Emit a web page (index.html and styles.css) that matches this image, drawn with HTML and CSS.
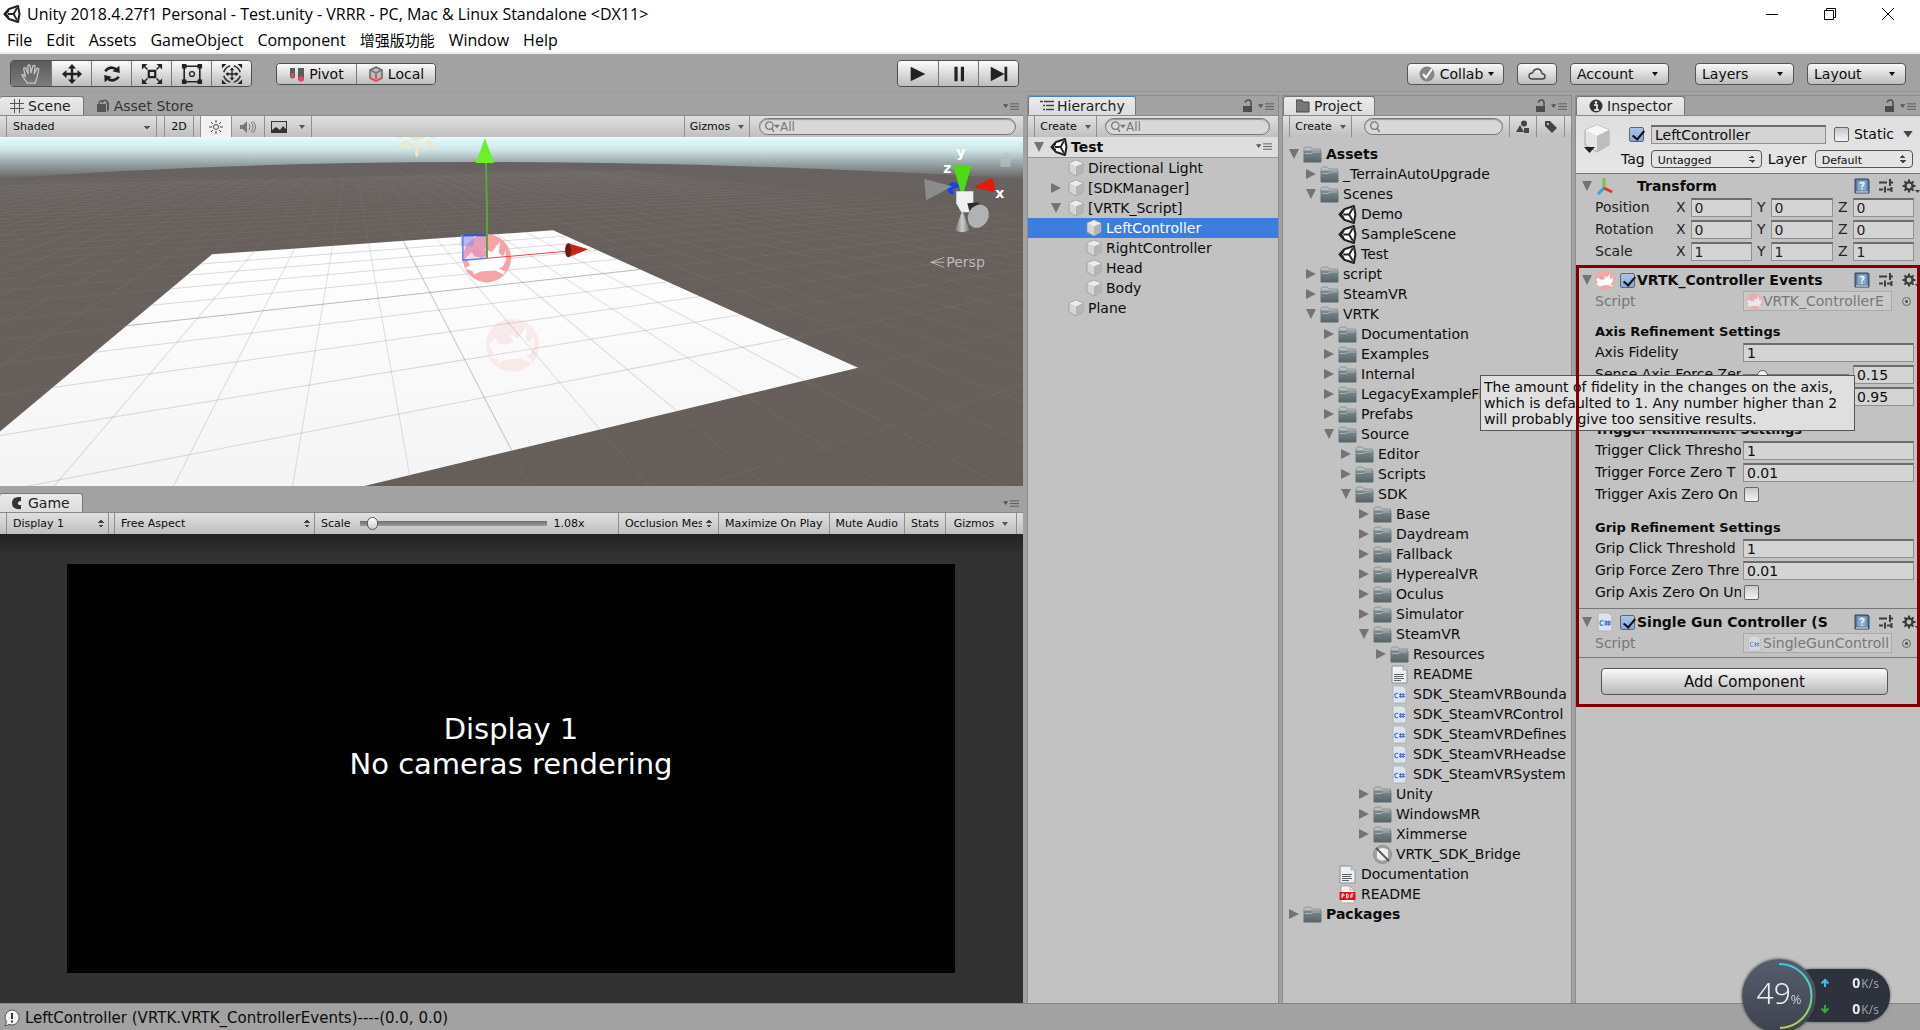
FILE: index.html
```html
<!DOCTYPE html>
<html lang="en">
<head>
<meta charset="utf-8">
<title>Unity 2018.4.27f1 Personal - Test.unity</title>
<link rel="stylesheet" href="styles.css">
</head>
<body>
<svg class="sprite" aria-hidden="true">
  <defs>
    <linearGradient id="folderFill" x1="0" y1="0" x2="0" y2="1"><stop offset="0" stop-color="#7c8a8e"/><stop offset="1" stop-color="#566468"/></linearGradient>
  </defs>
  <symbol id="unity" viewBox="0 0 18 18"><path d="M1.500 9 6 4l9-3 1.500 8-1.500 8-9-3z" fill="#fff" stroke="#222" stroke-width="2" stroke-linejoin="round"/><path d="M5 9h5.500l3.500-6M10.500 9l3.500 6" fill="none" stroke="#222" stroke-width="1.800"/><path d="m1 9 5-5v2.500L4 9l2 2.500V14z" fill="#222"/></symbol>
  <symbol id="folder" viewBox="0 0 19 19"><path d="M1 5V3.500L2.500 2h5L9 4h8.500v3H1z" fill="#b9c0c2" stroke="#7f898c" stroke-width=".8"/><rect x=".5" y="5.500" width="18" height="12" rx="1" fill="url(#folderFill)"/><path d="M2 8.500h6l2-1.500h7.500" stroke="#a9b7bb" fill="none"/></symbol>
  <symbol id="cube" viewBox="0 0 18 18"><path d="m9 1 7 3v9l-7 4-7-4V4z" fill="#d5d5d5" stroke="#999" stroke-width=".8"/><path d="m9 1.500 6.500 2.700L9 7.500 2.500 4.200z" fill="#ececec"/><path d="M9 7.500 15.600 4.500v8.300L9 16.600z" fill="#b4b4b4"/></symbol>
  <symbol id="doc" viewBox="0 0 19 19"><path d="M2 1h11l4 4v13H2z" fill="#eef1f3" stroke="#8a9298"/><path d="M13 1v4h4" fill="#cdd3d8" stroke="#8a9298" stroke-width=".6"/><path d="M4 9.500h10M4 11.500h9M4 13.500h10M4 15.500h7" stroke="#59636b"/></symbol>
  <symbol id="cs" viewBox="0 0 19 19"><path d="M3 1h10l3 3v14H3z" fill="#dde4ec" stroke="#a5adb6" stroke-width=".7"/><path d="M8 8.500Q4.800 7.500 4.800 10.500T8 12.500M10.500 8v5M13.200 8v5M9 9.500h6M9 11.500h6" fill="none" stroke="#4a70d0" stroke-width="1.200"/></symbol>
  <symbol id="pdf" viewBox="0 0 19 19"><path d="M3 1h9l4 4v13H3z" fill="#f6f6f6" stroke="#aaa"/><path d="M12 1v4h4" fill="none" stroke="#aaa"/><path d="M1.500 7h16v8h-16z" fill="#e1101a"/><path d="M4 13V9h1.500q1.200 1.200 0 2H4M8.500 9v4h1q2-2 0-4zM13 13V9h2.500M13 11h2" fill="none" stroke="#fff"/></symbol>
  <symbol id="ban" viewBox="0 0 19 19"><circle cx="9.500" cy="9.500" r="9" fill="#a2a2a2" stroke="#8a8a8a"/><path d="M4 5q6-4 11 0v8q-6 5-11 0z" fill="#efefef"/><path d="m3 3 13 13" stroke="#555" stroke-width="1.800"/></symbol>
  <symbol id="menu" viewBox="0 0 18 10"><path d="M0 2h6L3 6z" fill="#555"/><path d="M8 1.500h10M8 4.500h10M8 7.500h10" stroke="#555"/></symbol>
  <symbol id="lock" viewBox="0 0 12 14"><path d="M1 7h9v6H1z" fill="#4d4d4d"/><path d="M3 3.500Q4 1 6.500 1T9 4v3" fill="none" stroke="#4d4d4d" stroke-width="1.500"/></symbol>
  <symbol id="help" viewBox="0 0 16 16"><path d="M1 1h13l1 1v13H1z" fill="#5f7a9a" stroke="#33445a"/><path d="M3.500 2.500h9v10h-9z" fill="#85a9d0"/><path d="M6 5.500q2-2 4 0 0 1.500-2 2.500v1.500M8 10.500v1.500" stroke="#fff" stroke-width="1.300" fill="none"/><path d="M2 14h12" stroke="#e7eaee"/></symbol>
  <symbol id="preset" viewBox="0 0 14 14"><path d="M0 3.500h8M12 3.500h2M0 10.500h4M8 10.500h5" stroke="#3c3c3c" stroke-width="2"/><path d="M11 0v7M6 7.500v6M12.500 8v5" stroke="#3c3c3c" stroke-width="2"/></symbol>
  <symbol id="gear" viewBox="0 0 18 15"><circle cx="7" cy="7" r="3.600" fill="none" stroke="#3c3c3c" stroke-width="2.400"/><path d="M7 .5v3M7 10.500v3M.5 7h3M10.500 7h3M2.400 2.400l2 2M9.600 9.600l2 2M2.400 11.600l2-2M9.600 4.400l2-2" stroke="#3c3c3c" stroke-width="2"/><path d="M13 11h5l-2.500 3z" fill="#3c3c3c"/></symbol>
  <symbol id="pig" viewBox="0 0 48 48"><circle cx="24" cy="24" r="24" fill="#f5a5a5"/><path d="M2 24 9 18l2 4 8 2 6-4-4-6 8 4 8-11-1 12 4 3 3-6v10l-3 6-4 2 6 3-1 3-9-4-14 1-7 3-1-3-8-3 5-3-3-6z" fill="#fff"/><path d="m9 17 5-4 5 5-5 4z" fill="#ef9ab5"/></symbol>
  <symbol id="find" viewBox="0 0 18 14"><circle cx="6" cy="6" r="4.200" fill="none" stroke="#777" stroke-width="1.400"/><path d="m9 9 3 4" stroke="#777" stroke-width="1.600"/></symbol>
  <symbol id="findmenu" viewBox="0 0 18 14"><circle cx="6" cy="6" r="4.200" fill="none" stroke="#777" stroke-width="1.400"/><path d="m9 9 2 4" stroke="#777" stroke-width="1.600"/><path d="M11 5h7l-3.500 4z" fill="#777"/></symbol>
</svg>

<header class="titlebar">
  <svg class="i18"><use href="#unity"/></svg>
  <h1>Unity 2018.4.27f1 Personal - Test.unity - VRRR - PC, Mac &amp; Linux Standalone &lt;DX11&gt;</h1>
  <div class="window-buttons">
    <button aria-label="Minimize"><svg viewBox="0 0 14 14"><path d="M1 7.500h12" stroke="#000"/></svg></button>
    <button aria-label="Restore"><svg viewBox="0 0 14 14"><path d="M1.500 3.500h9v9h-9zM3.500 3.500v-2h9v9h-2" fill="none" stroke="#000"/></svg></button>
    <button aria-label="Close"><svg viewBox="0 0 14 14"><path d="m1 1 12 12M13 1 1 13" stroke="#000"/></svg></button>
  </div>
</header>
<nav class="menubar">
  <a href="#">File</a><a href="#">Edit</a><a href="#">Assets</a><a href="#">GameObject</a><a href="#">Component</a><a href="#" lang="zh">增强版功能</a><a href="#">Window</a><a href="#">Help</a>
</nav>

<div class="toolbar">
  <div class="bar-left">
    <div class="group tall">
      <button class="pressed" aria-label="Hand"><svg viewBox="0 0 24 24"><path d="M8 22q-3-4-6-9 1-2 4 2L4 6q1-2 2.500 0L9 12 8.500 3q1.500-2 2.500 0l1 8 2-8q2-1 2.500 0l-1 9 3-6q2-1 2 1l-2 9-2 6z" fill="none" stroke="#c4c4c4" stroke-width="1.400"/></svg></button>
      <button aria-label="Move"><svg viewBox="0 0 24 24"><path d="M12 4v16M4 12h16" stroke="#222" stroke-width="2.600"/><path d="m12 1 4.500 5h-9zM12 23l4.500-5h-9zM1 12l5-4.500v9zM23 12l-5-4.500v9z" fill="#222"/></svg></button>
      <button aria-label="Rotate"><svg viewBox="0 0 24 24"><path d="M4.500 9q6-7 13-1.500M19.500 15q-6 7-13 1.500" fill="none" stroke="#222" stroke-width="2.800"/><path d="m20 3 .5 8-8-2zM4 21l-.5-8 8 2z" fill="#222"/></svg></button>
      <button aria-label="Scale"><svg viewBox="0 0 24 24"><path d="M8.500 8.500h7v7h-7z" fill="none" stroke="#222" stroke-width="2.400"/><path d="m2 2 5 5M22 2l-5 5M2 22l5-5M22 22l-5-5" stroke="#222" stroke-width="1.600"/><path d="M1 1h6L1 7zM23 1h-6l6 6zM1 23h6l-6-6zM23 23h-6l6-6z" fill="#222"/></svg></button>
      <button aria-label="Rect"><svg viewBox="0 0 24 24"><path d="M3.500 3.500h17v17h-17z" fill="none" stroke="#222" stroke-width="1.800"/><circle cx="12" cy="12" r="2.700" fill="none" stroke="#222" stroke-width="1.400"/><path d="M1 1h5v5H1zM18 1h5v5h-5zM1 18h5v5H1zM18 18h5v5h-5z" fill="#222"/></svg></button>
      <button aria-label="Transform"><svg viewBox="0 0 24 24"><path d="M12 6v12M6 12h12" stroke="#222" stroke-width="1.400"/><path d="m12 5 2.500 3h-5zM12 19l2.500-3h-5zM5 12l3-2.500v5zM19 12l-3-2.500v5zM1 1h5L1 6zM23 1h-5l5 5zM1 23h5l-5-5zM23 23h-5l5-5z" fill="#222"/><path d="M3 10Q4.500 5 10 3M14 3q5.500 2 7 7M3 14q1.500 5 7 7M14 21q5.500-2 7-7" stroke="#333" stroke-width="1.800" fill="none"/></svg></button>
    </div>
    <div class="group">
      <button class="wide"><svg viewBox="0 0 16 16" class="i16"><path d="M1 2h5v9q-2.500 3-5 0zM9 2h6v12q-3 2-6 0z" fill="#5b5b5b"/><path d="M2 7h3v4q-1.500 2-3 0z" fill="#e84a55"/><circle cx="12" cy="13" r="2.800" fill="#e84a55"/></svg>Pivot</button>
      <button class="wide"><svg viewBox="0 0 16 16" class="i16"><path d="m8 1 6 3v8l-6 3-6-3V4z" fill="#bbb" stroke="#666" stroke-width="1.500"/><path d="m2 4 6 3 6-3M8 7v5" fill="none" stroke="#777" stroke-width="1.500"/><path d="M8 9v4M2 12l6 3 6-3" stroke="#e84a55" stroke-width="1.800" fill="none"/></svg>Local</button>
    </div>
  </div>
  <div class="group tall">
    <button aria-label="Play"><svg viewBox="0 0 24 24"><path d="m4 4 16 8-16 8z" fill="#222"/></svg></button>
    <button aria-label="Pause"><svg viewBox="0 0 24 24"><path d="M7 4h3.500v16H7zM14 4h3.500v16H14z" fill="#222"/></svg></button>
    <button aria-label="Step"><svg viewBox="0 0 24 24"><path d="m3 4 15 8-15 8zM18 4h3v16h-3z" fill="#222"/></svg></button>
  </div>
  <div class="bar-right">
    <button class="pill collab"><svg viewBox="0 0 16 16" class="i16"><circle cx="8" cy="8" r="7.500" fill="#858585"/><path d="m4 8 3 3.500L13 3" fill="none" stroke="#fff" stroke-width="2"/></svg>Collab<i class="caret"></i></button>
    <button class="pill cloud" aria-label="Services"><svg viewBox="0 0 18 14" class="i18"><path d="M4.500 12Q1 12 1 9t3.500-3Q6 2 9.500 2T14 6.500Q17 7 17 9.500T14 12z" fill="none" stroke="#444" stroke-width="1.400"/></svg></button>
    <button class="pill account">Account<i class="caret"></i></button>
    <button class="pill layers">Layers<i class="caret"></i></button>
    <button class="pill">Layout<i class="caret"></i></button>
  </div>
</div>

<main class="workspace">
  <div class="views">
    <section class="panel scene-panel">
      <div class="tabs">
        <button class="tab on flush"><svg viewBox="0 0 14 14" class="i14"><path d="M4.500 0v14M9.500 0v14M0 4.500h14M0 9.500h14" stroke="#555"/></svg>Scene</button>
        <button class="tab"><svg viewBox="0 0 14 14" class="i14"><path d="M1 5h9v8H1zM11 4l2-1v8l-2 2z" fill="#555"/><path d="M3 5q0-4 4-3M6 4q1-4 5-2v3" fill="none" stroke="#555" stroke-width="1.500"/></svg>Asset Store</button>
        <svg class="menu-icon"><use href="#menu"/></svg>
      </div>
      <div class="strip">
        <label class="cell shaded"><select aria-label="Shading"><option>Shaded</option></select></label>
        <button class="cell two-d">2D</button>
        <button class="cell lit" aria-label="Lighting"><svg viewBox="0 0 14 14" class="i14"><circle cx="7" cy="7" r="2.500" fill="none" stroke="#444"/><path d="M7 0v3M7 11v3M0 7h3M11 7h3M2 2l2 2M10 10l2 2M2 12l2-2M10 4l2-2" stroke="#444"/></svg></button>
        <button class="cell audio" aria-label="Audio"><svg viewBox="0 0 16 14" class="i16"><path d="M0 5h3l4-4v12L3 9H0z" fill="#777"/><path d="M9 4q2 3 0 6M11 2q4 5 0 10M13 1q5 6 0 12" fill="none" stroke="#777"/></svg></button>
        <button class="cell effects" aria-label="Effects"><svg viewBox="0 0 16 12" class="i16"><path d="M0 0h16v12H0z" fill="#333"/><path d="M1 1h14v7l-3-3-3 4-4-3-4 3z" fill="#ccc"/></svg><i class="arrow"></i></button>
        <span class="grow"></span>
        <button class="cell gizmos">Gizmos<i class="arrow"></i></button>
        <label class="search scene-search"><svg><use href="#findmenu"/></svg><input type="text" placeholder="All" aria-label="Search scene"></label>
      </div>
      <svg id="scene" class="scene" viewBox="0 0 1023 348" preserveAspectRatio="xMidYMid slice">
        <defs>
          <linearGradient id="sky" x1="0" y1="0" x2="0" y2="1"><stop offset="0" stop-color="#e6fdff"/><stop offset=".3" stop-color="#cfe6e8"/><stop offset=".65" stop-color="#93a0a2"/><stop offset="1" stop-color="#686362"/></linearGradient>
          <linearGradient id="ground" x1="0" y1="0" x2="0" y2="1"><stop offset="0" stop-color="#686464"/><stop offset=".25" stop-color="#67605c"/><stop offset="1" stop-color="#665e59"/></linearGradient>
          <linearGradient id="plane" x1="0" y1="0" x2="0" y2="1"><stop offset="0" stop-color="#ffffff"/><stop offset="1" stop-color="#eeeeee"/></linearGradient>
          <linearGradient id="grey" x1="0" y1="0" x2="1" y2="0"><stop offset="0" stop-color="#777"/><stop offset=".5" stop-color="#ccc"/><stop offset="1" stop-color="#777"/></linearGradient>
          <clipPath id="planeClip"><path d="M213 117 553 93l304 137L-236 492z"/></clipPath>
        </defs>
        <rect width="1023" height="348" fill="url(#ground)"/>
        <g id="far-grid" stroke="#8b8582" stroke-opacity=".2"></g>
        <path d="M0 0h1023v42Q720 24 460 25T0 42z" fill="url(#sky)"/>
        <path d="M213 117 553 93l304 137L-236 492z" fill="url(#plane)"/>
        <g id="plane-grid" clip-path="url(#planeClip)" stroke="#777"></g>
        <g stroke="#f6e6c4" stroke-width="4" stroke-linecap="round"><circle cx="417" cy="-6" r="10" fill="#f6e6c4" stroke="none"/><path d="M417 9v9M410 7l-2 4M424 7l2 4M406 4l-5 5M428 4l5 5M402 0h-2M432 0h2" stroke-width="3"/></g>
        <use href="#pig" x="463" y="96" width="48" height="50"/>
        <use href="#pig" x="486" y="181" width="53" height="53" opacity=".18"/>
        <path d="M463 98h23l1 23-24 2z" fill="#c58af0" fill-opacity=".25"/><path d="M461 97h13v12h-13z" fill="#7f8ff0" fill-opacity=".5"/><path d="M463 98h24" stroke="#2f50d8" stroke-width="2"/><path d="M463 98v25l24-2" fill="none" stroke="#6a80f0" stroke-width="1.500"/>
        <path d="M487 121V68l-1-42" stroke="#5aa63a" stroke-width="2" fill="none"/><path d="M485 1l9 25h-18z" fill="#6cf028"/>
        <path d="m487 121 79-7" stroke="#f04a40"/><path d="M588 112l-20-6q-5 7 0 14z" fill="#c8241f"/><ellipse cx="568" cy="113" rx="3" ry="7" fill="#6d1a18"/>
        <g><circle cx="952" cy="51" r="6" fill="#1b3fe8"/><path d="M923 42l28 7-26 14z" fill="#8c8c8c"/><path d="m951 52 11-4 10 4-2 12-14 2z" fill="#60666c"/><path d="M952 29h18l-9 31z" fill="#4fdb14"/><path d="M955 54h17v21h-12l-5-9z" fill="#eef0f2"/><path d="m972 50 18-9q6 8 2 14z" fill="#e01c10"/><path d="M966 66l12-1-8 16z" fill="#2c2c2c"/><ellipse cx="977" cy="79" rx="10" ry="12" fill="#b0b2b4" transform="rotate(30 977 79)"/><path d="m961 73 7 20q-7 4-14 0z" fill="url(#grey)"/></g>
        <g class="axis"><text x="955" y="20">y</text><text x="942" y="36">z</text><text x="994" y="61">x</text></g>
        <path d="M943 120l-13 5 13 5M930 125h13" fill="none" stroke="#bdbab8"/><text class="persp" x="945" y="130">Persp</text>
        <path d="M999 22h10v8h-10zM1002 18q3-6 6 0v4" fill="#b9c6c5" opacity=".6"/>
      </svg>
    </section>
    <section class="panel game-panel">
      <div class="tabs">
        <button class="tab on flush"><svg viewBox="0 0 14 14" class="i14"><path d="M11 1Q2 0 2 7t9 6V9q-4 0-3-2 0-2 3-2z" fill="#333"/></svg>Game</button>
        <svg class="menu-icon"><use href="#menu"/></svg>
      </div>
      <div class="strip">
        <label class="cell display"><select class="updown" aria-label="Display"><option>Display 1</option></select></label>
        <label class="cell aspect"><select class="updown" aria-label="Aspect"><option>Free Aspect</option></select></label>
        <label class="scale">Scale <input type="range" min="0.9" max="5" step="0.01" value="1.08"><output>1.08x</output></label>
        <span class="grow"></span>
        <label class="cell occlusion"><select class="updown" aria-label="Occlusion"><option>Occlusion Mesh</option></select></label>
        <button class="cell">Maximize On Play</button>
        <button class="cell">Mute Audio</button>
        <button class="cell">Stats</button>
        <button class="cell game-gizmos">Gizmos<i class="arrow"></i></button>
      </div>
      <div class="game"><div class="display-area"><p>Display 1<br>No cameras rendering</p></div></div>
    </section>
  </div>

  <section class="panel side">
    <div class="tabs">
      <button class="tab on focus"><svg viewBox="0 0 14 14" class="i14"><path d="M0 2.500h3M4 2.500h10M3 6.500h2M6 6.500h8M3 10.500h2M6 10.500h8" stroke="#444" stroke-width="1.500"/></svg>Hierarchy</button>
      <svg class="lock-icon"><use href="#lock"/></svg><svg class="menu-icon"><use href="#menu"/></svg>
    </div>
    <div class="strip">
      <button class="cell create">Create<i class="arrow"></i></button>
      <label class="search hier-search"><svg><use href="#findmenu"/></svg><input type="text" placeholder="All" aria-label="Search hierarchy"></label>
    </div>
    <ul class="tree hierarchy">
      <li class="root"><i class="open"></i><svg><use href="#unity"/></svg><b>Test</b><svg class="menu-icon"><use href="#menu"/></svg></li>
      <li class="d1"><i></i><svg><use href="#cube"/></svg><span>Directional Light</span></li>
      <li class="d1"><i class="shut"></i><svg><use href="#cube"/></svg><span>[SDKManager]</span></li>
      <li class="d1"><i class="open"></i><svg><use href="#cube"/></svg><span>[VRTK_Script]</span></li>
      <li class="d2 selected"><i></i><svg><use href="#cube"/></svg><span>LeftController</span></li>
      <li class="d2"><i></i><svg><use href="#cube"/></svg><span>RightController</span></li>
      <li class="d2"><i></i><svg><use href="#cube"/></svg><span>Head</span></li>
      <li class="d2"><i></i><svg><use href="#cube"/></svg><span>Body</span></li>
      <li class="d1"><i></i><svg><use href="#cube"/></svg><span>Plane</span></li>
    </ul>
  </section>

  <section class="panel side">
    <div class="tabs">
      <button class="tab on"><svg viewBox="0 0 14 14" class="i14"><path d="M0 3V1h6l1 2h6v10H0z" fill="#777" stroke="#444"/></svg>Project</button>
      <svg class="lock-icon"><use href="#lock"/></svg><svg class="menu-icon"><use href="#menu"/></svg>
    </div>
    <div class="strip">
      <button class="cell create">Create<i class="arrow"></i></button>
      <label class="search project-search"><svg><use href="#find"/></svg><input type="text" aria-label="Search project"></label>
      <button class="cell filter" aria-label="Filter by type"><svg viewBox="0 0 14 14" class="i14"><circle cx="8" cy="3.500" r="3" fill="#444"/><path d="m4 5 4 7H0zM8 8h5v5H8z" fill="#444"/></svg></button>
      <button class="cell filter last" aria-label="Filter by label"><svg viewBox="0 0 14 14" class="i14"><path d="M1 1h5l7 7-5 5-7-7z" fill="#444"/><circle cx="4" cy="4" r="1" fill="#ddd"/></svg></button>
    </div>
    <ul class="tree project">
      <li><i class="open"></i><svg><use href="#folder"/></svg><b>Assets</b></li>
      <li class="d1"><i class="shut"></i><svg><use href="#folder"/></svg><span>_TerrainAutoUpgrade</span></li>
      <li class="d1"><i class="open"></i><svg><use href="#folder"/></svg><span>Scenes</span></li>
      <li class="d2"><i></i><svg><use href="#unity"/></svg><span>Demo</span></li>
      <li class="d2"><i></i><svg><use href="#unity"/></svg><span>SampleScene</span></li>
      <li class="d2"><i></i><svg><use href="#unity"/></svg><span>Test</span></li>
      <li class="d1"><i class="shut"></i><svg><use href="#folder"/></svg><span>script</span></li>
      <li class="d1"><i class="shut"></i><svg><use href="#folder"/></svg><span>SteamVR</span></li>
      <li class="d1"><i class="open"></i><svg><use href="#folder"/></svg><span>VRTK</span></li>
      <li class="d2"><i class="shut"></i><svg><use href="#folder"/></svg><span>Documentation</span></li>
      <li class="d2"><i class="shut"></i><svg><use href="#folder"/></svg><span>Examples</span></li>
      <li class="d2"><i class="shut"></i><svg><use href="#folder"/></svg><span>Internal</span></li>
      <li class="d2"><i class="shut"></i><svg><use href="#folder"/></svg><span>LegacyExampleFi</span></li>
      <li class="d2"><i class="shut"></i><svg><use href="#folder"/></svg><span>Prefabs</span></li>
      <li class="d2"><i class="open"></i><svg><use href="#folder"/></svg><span>Source</span></li>
      <li class="d3"><i class="shut"></i><svg><use href="#folder"/></svg><span>Editor</span></li>
      <li class="d3"><i class="shut"></i><svg><use href="#folder"/></svg><span>Scripts</span></li>
      <li class="d3"><i class="open"></i><svg><use href="#folder"/></svg><span>SDK</span></li>
      <li class="d4"><i class="shut"></i><svg><use href="#folder"/></svg><span>Base</span></li>
      <li class="d4"><i class="shut"></i><svg><use href="#folder"/></svg><span>Daydream</span></li>
      <li class="d4"><i class="shut"></i><svg><use href="#folder"/></svg><span>Fallback</span></li>
      <li class="d4"><i class="shut"></i><svg><use href="#folder"/></svg><span>HyperealVR</span></li>
      <li class="d4"><i class="shut"></i><svg><use href="#folder"/></svg><span>Oculus</span></li>
      <li class="d4"><i class="shut"></i><svg><use href="#folder"/></svg><span>Simulator</span></li>
      <li class="d4"><i class="open"></i><svg><use href="#folder"/></svg><span>SteamVR</span></li>
      <li class="d5"><i class="shut"></i><svg><use href="#folder"/></svg><span>Resources</span></li>
      <li class="d5"><i></i><svg><use href="#doc"/></svg><span>README</span></li>
      <li class="d5"><i></i><svg><use href="#cs"/></svg><span>SDK_SteamVRBounda</span></li>
      <li class="d5"><i></i><svg><use href="#cs"/></svg><span>SDK_SteamVRControl</span></li>
      <li class="d5"><i></i><svg><use href="#cs"/></svg><span>SDK_SteamVRDefines</span></li>
      <li class="d5"><i></i><svg><use href="#cs"/></svg><span>SDK_SteamVRHeadse</span></li>
      <li class="d5"><i></i><svg><use href="#cs"/></svg><span>SDK_SteamVRSystem</span></li>
      <li class="d4"><i class="shut"></i><svg><use href="#folder"/></svg><span>Unity</span></li>
      <li class="d4"><i class="shut"></i><svg><use href="#folder"/></svg><span>WindowsMR</span></li>
      <li class="d4"><i class="shut"></i><svg><use href="#folder"/></svg><span>Ximmerse</span></li>
      <li class="d4"><i></i><svg><use href="#ban"/></svg><span>VRTK_SDK_Bridge</span></li>
      <li class="d2"><i></i><svg><use href="#doc"/></svg><span>Documentation</span></li>
      <li class="d2"><i></i><svg><use href="#pdf"/></svg><span>README</span></li>
      <li><i class="shut"></i><svg><use href="#folder"/></svg><b>Packages</b></li>
    </ul>
  </section>

  <section class="panel side inspector">
    <div class="tabs">
      <button class="tab on"><svg viewBox="0 0 14 14" class="i14"><circle cx="7" cy="7" r="6.500" fill="#333"/><path d="M5 6h3v5M5 11h5" stroke="#fff" stroke-width="1.500" fill="none"/><circle cx="7" cy="3.500" r="1.200" fill="#fff"/></svg>Inspector</button>
      <svg class="lock-icon"><use href="#lock"/></svg><svg class="menu-icon"><use href="#menu"/></svg>
    </div>
    <div class="object-head">
      <svg class="object-icon" viewBox="0 0 30 30"><path d="m15 1 12 5v15l-12 7L3 21V6z" fill="#e4e4e4" stroke="#aaa"/><path d="m15 1 12 5-12 6L3 6z" fill="#f6f6f6"/><path d="m15 12 12-6v15l-12 7z" fill="#bdbdbd"/><path d="M2 23h11l-5.500 6z" fill="#222"/></svg>
      <div class="object-rows">
        <div class="object-row"><input type="checkbox" checked aria-label="Active"><input class="field name" type="text" value="LeftController" aria-label="Name"><input type="checkbox" id="static"><label for="static">Static</label><i class="open dark"></i></div>
        <div class="object-row second"><label for="tag">Tag</label><select id="tag" class="popup"><option>Untagged</option></select><label for="layer">Layer</label><select id="layer" class="popup layer"><option>Default</option></select></div>
      </div>
    </div>
    <div class="component transform">
      <h2><i class="open"></i><svg class="comp-icon" viewBox="0 0 20 20"><path d="M9 12V2" stroke="#7dc242" stroke-width="3"/><path d="m9 12-6 6" stroke="#3d9fd8" stroke-width="3"/><path d="m9 12 8 4" stroke="#e0342b" stroke-width="3"/></svg><span class="comp-name">Transform</span><svg class="help"><use href="#help"/></svg><svg class="preset"><use href="#preset"/></svg><svg class="gear"><use href="#gear"/></svg></h2>
      <div class="vector"><span>Position</span><label>X<input class="field" type="text" value="0"></label><label>Y<input class="field" type="text" value="0"></label><label>Z<input class="field" type="text" value="0"></label></div>
      <div class="vector"><span>Rotation</span><label>X<input class="field" type="text" value="0"></label><label>Y<input class="field" type="text" value="0"></label><label>Z<input class="field" type="text" value="0"></label></div>
      <div class="vector"><span>Scale</span><label>X<input class="field" type="text" value="1"></label><label>Y<input class="field" type="text" value="1"></label><label>Z<input class="field" type="text" value="1"></label></div>
    </div>
    <div class="marked">
      <div class="component">
        <h2><i class="open"></i><svg class="comp-icon"><use href="#pig"/></svg><input type="checkbox" checked aria-label="VRTK_Controller Events enabled"><span class="comp-name">VRTK_Controller Events</span><svg class="help"><use href="#help"/></svg><svg class="preset"><use href="#preset"/></svg><svg class="gear"><use href="#gear"/></svg></h2>
        <div class="row muted"><span>Script</span><div class="object-ref"><svg><use href="#pig"/></svg><span>VRTK_ControllerE</span></div><i class="picker"></i></div>
        <h3 class="first">Axis Refinement Settings</h3>
        <div class="row"><label for="f1">Axis Fidelity</label><input id="f1" class="field" type="text" value="1"></div>
        <div class="row"><label for="f2">Sense Axis Force Zer</label><input class="slide" type="range" min="0" max="1" step="0.01" value="0.15" aria-label="Sense axis force zero threshold"><input id="f2" class="field short" type="text" value="0.15"></div>
        <div class="row"><label for="f3">Sense Axis Press</label><input class="slide" type="range" min="0" max="1" step="0.01" value="0.95" aria-label="Sense axis press threshold"><input id="f3" class="field short" type="text" value="0.95"></div>
        <h3>Trigger Refinement Settings</h3>
        <div class="row"><label for="f4">Trigger Click Thresho</label><input id="f4" class="field" type="text" value="1"></div>
        <div class="row"><label for="f5">Trigger Force Zero T</label><input id="f5" class="field" type="text" value="0.01"></div>
        <div class="row"><label for="f6">Trigger Axis Zero On</label><input id="f6" type="checkbox"></div>
        <h3>Grip Refinement Settings</h3>
        <div class="row"><label for="f7">Grip Click Threshold</label><input id="f7" class="field" type="text" value="1"></div>
        <div class="row"><label for="f8">Grip Force Zero Thre</label><input id="f8" class="field" type="text" value="0.01"></div>
        <div class="row"><label for="f9">Grip Axis Zero On Un</label><input id="f9" type="checkbox"></div>
      </div>
      <div class="component ruled">
        <h2><i class="open"></i><svg class="comp-icon"><use href="#cs"/></svg><input type="checkbox" checked aria-label="Single Gun Controller enabled"><span class="comp-name">Single Gun Controller (S</span><svg class="help"><use href="#help"/></svg><svg class="preset"><use href="#preset"/></svg><svg class="gear"><use href="#gear"/></svg></h2>
        <div class="row muted"><span>Script</span><div class="object-ref"><svg><use href="#cs"/></svg><span>SingleGunControll</span></div><i class="picker"></i></div>
      </div>
      <div class="add"><button>Add Component</button></div>
      <div class="tooltip" role="tooltip">The amount of fidelity in the changes on the axis,<br>which is defaulted to 1. Any number higher than 2<br>will probably give too sensitive results.</div>
    </div>
  </section>
</main>

<footer class="status"><svg viewBox="0 0 18 18" class="i18"><path d="M9 1a7.500 7.500 0 1 1-3 14.500L2 17l1.500-4A7.500 7.500 0 0 1 9 1z" fill="#f4f4f4" stroke="#555"/><path d="M9 4v6M9 11.500v2" stroke="#333" stroke-width="2"/></svg>LeftController (VRTK.VRTK_ControllerEvents)----(0.0, 0.0)</footer>

<aside class="monitor">
  <div class="net">
    <div><svg viewBox="0 0 10 10"><path d="M5 9V2M1.500 5.500 5 2l3.500 3.500" fill="none" stroke="#4ab4f5" stroke-width="2"/></svg><span><b>0</b>K/s</span></div>
    <div><svg viewBox="0 0 10 10"><path d="M5 1v7M1.500 4.500 5 8l3.500-3.500" fill="none" stroke="#2fae3c" stroke-width="2"/></svg><span><b>0</b>K/s</span></div>
  </div>
  <div class="dial">
    <svg viewBox="0 0 74 74"><defs><linearGradient id="arc" x1="0" y1="0" x2="0" y2="1"><stop offset="0" stop-color="#3fc8d8"/><stop offset=".5" stop-color="#5fd6a8"/><stop offset="1" stop-color="#c0cc4a"/></linearGradient></defs><path d="M37 5a32 32 0 0 1 1 64" fill="none" stroke="url(#arc)" stroke-width="2"/></svg>
    <p>49<small>%</small></p>
  </div>
</aside>
<script src="scene.js"></script>
</body>
</html>
```
FILE: styles.css
```css
* { box-sizing: border-box; }
body {
  margin: 0;
  min-height: 100vh;
  display: flex;
  flex-direction: column;
  background: #a2a2a2;
  color: #0c0c0c;
  font: 14px/20px "DejaVu Sans", "Noto Sans CJK SC", sans-serif;
  overflow: hidden;
}
button, input, select { font: inherit; color: inherit; margin: 0; padding: 0; border: 0; background: none; }
select { appearance: none; border-radius: 0; }
h1, h2, h3, p, ul { margin: 0; padding: 0; font-weight: normal; }
svg { display: block; flex: none; }
.sprite { position: absolute; width: 0; height: 0; }
.i14 { width: 14px; height: 14px; }
.i16 { width: 16px; height: 16px; }
.i18 { width: 18px; height: 18px; }
.grow { flex: 1; }

/* window chrome */
.titlebar, .menubar { background: #fff; font-family: "Open Sans", "Noto Sans CJK SC", sans-serif; font-size: 16px; color: #000; display: flex; align-items: center; }
.titlebar { height: 30px; padding: 0 0 2px 3px; gap: 6px; }
.titlebar h1 { font-size: 16px; flex: 1; white-space: nowrap; }
.window-buttons { display: flex; gap: 44px; padding-right: 25px; }
.window-buttons button { width: 14px; height: 14px; }
.menubar { height: 24px; padding: 0 8px 2px 7px; gap: 14px; border-bottom: 2px solid #f0f0f0; }
.menubar a { color: inherit; text-decoration: none; }
.menubar a:lang(zh) { font-size: 15px; }

/* main toolbar */
.toolbar { display: grid; grid-template-columns: 1fr auto 1fr; align-items: center; height: 38px; padding: 2px 14px 0 10px; border-bottom: 1px solid #999; }
.bar-left { display: flex; align-items: center; gap: 24px; }
.bar-right { display: flex; justify-content: flex-end; gap: 13px; }
.group { display: flex; border: 1px solid #4e4e4e; border-radius: 4px; overflow: hidden; }
.group button { width: 40px; height: 20px; display: flex; align-items: center; justify-content: center; background: linear-gradient(#fbfbfb, #bdbdbd); }
.group button + button { border-left: 1px solid #777; }
.group.tall button { height: 25px; }
.group.tall svg { width: 22px; height: 22px; }
.group .pressed { background: linear-gradient(#5a5a5a, #7d7d7d); }
.group .wide { width: 79px; gap: 4px; }
.pill { width: 99px; height: 22px; padding: 0 10px 0 6px; display: flex; align-items: center; justify-content: space-between; background: linear-gradient(#f8f8f8, #bdbdbd); border: 1px solid #555; border-radius: 4px; }
.pill.collab { width: 97px; padding-left: 11px; padding-right: 9px; }
.pill.cloud { width: 40px; padding: 0; justify-content: center; }
.pill.account { margin-right: 13px; }
.caret { border: 3px solid transparent; border-top: 4px solid #111; border-bottom: 0; }

/* panels */
.workspace { flex: 1; display: grid; grid-template-columns: minmax(0, 1fr) 250px 288px 344px; gap: 5px; padding-top: 4px; }
.views { display: flex; flex-direction: column; gap: 7px; min-width: 0; }
.panel { display: flex; flex-direction: column; }
.side { background: linear-gradient(#a2a2a2 19px, #c2c2c2 19px); box-shadow: 0 0 0 1px #8b8b8b; }
.scene-panel { flex: 390; min-height: 0; }
.game-panel { flex: 510; min-height: 0; }
.tabs { display: flex; align-items: flex-end; height: 19px; padding-right: 4px; background: #a2a2a2; }
.tab { display: flex; align-items: center; gap: 4px; height: 19px; padding: 0 12px; color: #333; white-space: nowrap; }
.tab.on { background: linear-gradient(#eaeaea, #dcdcdc); border: 1px solid #777; border-bottom: 0; border-radius: 3px 3px 0 0; color: #222; }
.tab.flush { border-left: 0; padding-left: 10px; }
.tab.focus { border-top-color: #4a7fcc; padding: 0 10px 0 11px; gap: 3px; }
.menu-icon { width: 16px; height: 10px; margin: 0 0 3px auto; }
.lock-icon { width: 12px; height: 14px; margin: 0 4px 2px auto; }
.lock-icon + .menu-icon { margin-left: 0; }
.strip { display: flex; align-items: center; height: 22px; flex: none; background: linear-gradient(#e0e0e0, #bfbfbf); border-top: 1px solid #8a8a8a; font-size: 11px; white-space: nowrap; }
.cell { height: 21px; padding: 0 6px; border-right: 1px solid #8e8e8e; display: flex; align-items: center; justify-content: center; gap: 8px; }
.cell select { width: 100%; height: 20px; }
.arrow { border: 3px solid transparent; border-top: 4px solid #555; border-bottom: 0; }
.shaded { width: 151px; margin-left: 6px; border-left: 1px solid #8e8e8e; }
.shaded select { background: conic-gradient(from -45deg at 50% 100%, #555 90deg, transparent 0) no-repeat right 0 top 9px / 6px 3px; }
.updown, .popup { background: conic-gradient(from 135deg at 50% 0, #444 90deg, transparent 0) no-repeat right 0 top 6px / 6px 3px, conic-gradient(from -45deg at 50% 100%, #444 90deg, transparent 0) no-repeat right 0 top 11px / 6px 3px; }
.two-d { width: 30px; margin-left: 7px; border-left: 1px solid #8e8e8e; }
.lit { width: 32px; margin-left: 6px; background: #f2f2f2; border-left: 1px solid #8e8e8e; }
.audio { width: 33px; }
.effects { width: 47px; gap: 12px; }
.gizmos { border-left: 1px solid #8e8e8e; width: 66px; }
.search { display: flex; align-items: center; height: 17px; border: 1px solid #777; border-radius: 9px; background: #d8d8d8; box-shadow: inset 0 1px 1px #999; padding-left: 4px; margin: 0 7px 0 9px; min-width: 0; }
.search svg { width: 16px; height: 13px; }
.search input { width: 100%; min-width: 0; outline: 0; color: #777; font-size: 12px; }
.search input::placeholder { color: #777; opacity: 1; }
.scene-search { width: 257px; }
.hier-search { flex: 1; margin: 0 8px; }
.project-search { flex: 1; margin: 0 6px 0 12px; }
.create { width: 63px; margin-left: 6px; border-left: 1px solid #8e8e8e; }
.filter { width: 28px; }
.filter:not(.last) { border-left: 1px solid #8e8e8e; }
.last { margin-right: 6px; }

/* scene view */
.scene { width: 100%; height: 0; flex: 1; background: #665e59; }
.axis text { font-size: 14px; font-weight: bold; fill: #fff; }
.persp { font-size: 14px; fill: #bdbab8; }

/* game view */
.display { width: 103px; margin-left: 6px; border-left: 1px solid #8e8e8e; padding-right: 4px; }
.aspect { width: 201px; margin-left: 5px; border-left: 1px solid #8e8e8e; padding-right: 4px; }
.scale { display: flex; align-items: center; padding-left: 6px; gap: 7px; }
.scale input { width: 187px; margin-left: 2px; }
input[type="range"] { appearance: none; height: 14px; background: linear-gradient(#6f6f6f, #9b9b9b) no-repeat center / 100% 5px; }
input[type="range"]::-webkit-slider-thumb { appearance: none; width: 11px; height: 13px; border: 1px solid #555; border-radius: 6px; background: linear-gradient(#fff, #ccc); }
.occlusion { width: 101px; border-left: 1px solid #8e8e8e; }
.occlusion select { padding-right: 10px; overflow: hidden; text-overflow: clip; }
.game-gizmos { margin-right: 6px; width: 71px; }
.game { flex: 1; display: flex; padding: 30px 68px 30px 67px; background: linear-gradient(#222, #313131 20px); }
.display-area { flex: 1; background: #000; color: #fff; display: flex; align-items: center; justify-content: center; text-align: center; font-size: 29px; line-height: 35px; padding-bottom: 44px; }

/* trees */
.tree { list-style: none; overflow: hidden; }
.tree li { display: flex; align-items: center; height: 20px; padding-left: 6px; white-space: nowrap; }
.tree .d1 { padding-left: 23px; }
.tree .d2 { padding-left: 41px; }
.tree .d3 { padding-left: 58px; }
.tree .d4 { padding-left: 76px; }
.tree .d5 { padding-left: 93px; }
.tree svg { width: 19px; height: 19px; margin-right: 4px; }
.tree i { width: 10px; margin-right: 4px; flex: none; }
.open, .shut { width: 10px; height: 10px; background: #747474; flex: none; }
.open { clip-path: polygon(0 0, 100% 0, 50% 100%); }
.shut { clip-path: polygon(0 0, 100% 50%, 0 100%); }
.open.dark { background: #444; height: 7px; }
.project { margin: 7px 1px 0 0; }
.hierarchy i { margin-right: 6px; }
.hierarchy svg { width: 18px; height: 18px; margin-right: 3px; }
.hierarchy .root { height: 21px; background: #dedede; border-bottom: 1px solid #999; }
.hierarchy .menu-icon { width: 16px; height: 10px; margin: 0 6px 0 auto; }
.selected { background: #3e7de0; color: #fff; }
b, .comp-name { font-size: 14px; font-weight: bold; }
h3 { font-size: 13px; font-weight: bold; }

/* inspector */
.object-head { display: flex; height: 59px; padding: 8px 7px 0 6px; gap: 17px; background: linear-gradient(#dedede, #e6e6e6); border-top: 1px solid #8a8a8a; border-bottom: 1px solid #777; }
.object-icon { width: 30px; height: 30px; }
.object-rows { flex: 1; min-width: 0; }
.object-row { display: flex; align-items: center; height: 20px; gap: 5px; }
.object-row .name { flex: 1; margin: 0 3px 0 2px; }
.object-row .dark { margin-left: 4px; }
.second { height: 30px; gap: 6px; margin-left: -8px; }
.popup { width: 111px; height: 18px; padding-left: 6px; border: 1px solid #555; border-radius: 4px; font-size: 11px; background-color: #e4e4e4; background-position: right 6px top 4px, right 6px top 9px; }
.popup.layer { flex: 1; width: auto; margin-left: 2px; }
input[type="checkbox"] { appearance: none; flex: none; width: 15px; height: 15px; border: 1px solid #666; border-radius: 2px; background: linear-gradient(#c8c8c8, #f4f4f4); }
input[type="checkbox"]:checked { background: linear-gradient(#a9c4e6, #87aadb); }
input[type="checkbox"]:checked::after { content: ""; display: block; width: 5px; height: 10px; margin: 0 0 0 5px; border: solid #111; border-width: 0 2px 2px 0; transform: rotate(40deg); }
.field { height: 19px; min-width: 0; padding-left: 3px; background: #d4d4d4; border: 1px solid #8f8f8f; border-top: 2px solid #6c6c6c; }
.component { padding: 2px 6px 5px; }
.component h2 { display: flex; align-items: center; height: 20px; }
.comp-icon { width: 20px; height: 20px; margin: 0 5px 0 3px; }
.component input[type="checkbox"] { margin-right: 2px; }
.row > input[type="checkbox"] { margin-left: 1px; }
.comp-name { flex: 1; white-space: nowrap; margin-right: 12px; }
.help { width: 16px; height: 16px; margin-right: 9px; }
.preset { width: 14px; height: 14px; margin-right: 9px; }
.gear { width: 18px; height: 15px; margin-right: -6px; }
.transform { padding-bottom: 3px; }
.transform .comp-name { padding-left: 17px; }
.vector { display: flex; align-items: center; height: 22px; padding-left: 13px; color: #222; }
.vector span { width: 76px; }
.vector label { display: flex; flex: 1; gap: 5px; margin-left: 5px; align-items: center; }
.vector .field { flex: 1; width: 40px; }
.marked { position: relative; padding: 3px 0; }
.marked::after { content: ""; position: absolute; inset: 0; border: 3px solid #840000; z-index: 3; pointer-events: none; }
.row { display: flex; align-items: center; height: 22px; padding-left: 13px; white-space: nowrap; }
.row > label, .row > span { width: 146px; margin-right: 2px; overflow: hidden; flex: none; }
.row .field { flex: 1; }
.row .slide { width: 106px; flex: 1; min-width: 0; margin: 5px 4px 0 0; }
.row .short { flex: none; width: 61px; }
.muted { color: #777; }
.object-ref { display: flex; align-items: center; width: 149px; height: 20px; padding: 0 2px; border: 1px solid #aaa; background: #cacaca; overflow: hidden; }
.object-ref svg { width: 17px; height: 17px; opacity: .6; }
.object-ref span { overflow: hidden; }
.picker { width: 9px; height: 9px; margin: 0 3px 0 auto; border: 1px solid #666; border-radius: 50%; background: radial-gradient(#555 1px, transparent 2px); }
h3 { height: 18px; line-height: 18px; margin: 14px 0 0 13px; }
h3.first { margin-top: 11px; }
.ruled { padding: 3px 6px 3px; border: solid #777; border-width: 1px 0; }
.add { padding: 10px 32px 9px 25px; }
.add button { width: 100%; height: 27px; border: 1px solid #555; border-radius: 4px; background: linear-gradient(#fafafa, #b8b8b8); font-size: 15px; }
.tooltip { position: absolute; z-index: 2; left: -96px; top: 110px; width: 375px; height: 56px; padding: 3px; line-height: 16px; background: #dfdfdf; border: 1px solid #555; white-space: nowrap; }

.status { display: flex; align-items: center; gap: 4px; height: 27px; padding: 2px 3px 0; border-top: 1px solid #858585; font-size: 15px; }

/* floating network monitor */
.monitor { position: fixed; right: 30px; bottom: 8px; display: flex; align-items: center; color: #eceef0; font-family: "Noto Sans", sans-serif; }
.net { width: 104px; height: 53px; margin-left: 44px; padding: 1px 11px 0 34px; border-radius: 26px; background: #2d323c; box-shadow: 0 0 3px #555; }
.net div { display: flex; align-items: center; justify-content: space-between; height: 26px; font-size: 12px; color: #9ca0a6; }
.net svg { width: 10px; height: 10px; }
.net b { font-size: 14px; color: #eceef0; margin-right: 1px; }
.dial { position: absolute; left: 0; width: 74px; height: 74px; border-radius: 50%; background: linear-gradient(#565d6c, #3d434f); box-shadow: 0 0 3px #333; display: flex; align-items: center; justify-content: center; }
.dial svg { position: absolute; inset: 0; }
.dial p { font-size: 30px; font-weight: 300; }
.dial small { font-size: 13px; }
```
FILE: scene.js
```js
// Projects the 10 x 10 ground plane onto its four screen corners and draws
// the grid on it and on the ground around it.
(function () {
  var NS = "http://www.w3.org/2000/svg";
  var a = [213, 117], b = [553, 93], c = [857, 230], d = [-236, 492];

  var dx1 = b[0] - c[0], dx2 = d[0] - c[0], sx = a[0] - b[0] + c[0] - d[0];
  var dy1 = b[1] - c[1], dy2 = d[1] - c[1], sy = a[1] - b[1] + c[1] - d[1];
  var det = dx1 * dy2 - dx2 * dy1;
  var g = (sx * dy2 - dx2 * sy) / det;
  var h = (dx1 * sy - sx * dy1) / det;

  function w(u, v) { return g * u + h * v + 1; }
  function project(u, v) {
    var k = w(u, v);
    return [
      ((b[0] - a[0] + g * b[0]) * u + (d[0] - a[0] + h * d[0]) * v + a[0]) / k,
      ((b[1] - a[1] + g * b[1]) * u + (d[1] - a[1] + h * d[1]) * v + a[1]) / k
    ];
  }

  // Cuts the part of a segment that lies behind the camera.
  function line(group, u1, v1, u2, v2, opacity) {
    var near = 0.12, w1 = w(u1, v1), w2 = w(u2, v2), t;
    if (w1 < near && w2 < near) return;
    if (w1 < near) { t = (near - w1) / (w2 - w1); u1 += (u2 - u1) * t; v1 += (v2 - v1) * t; }
    if (w2 < near) { t = (near - w2) / (w1 - w2); u2 += (u1 - u2) * t; v2 += (v1 - v2) * t; }
    var p = project(u1, v1), q = project(u2, v2);
    var el = document.createElementNS(NS, "line");
    el.setAttribute("x1", p[0]); el.setAttribute("y1", p[1]);
    el.setAttribute("x2", q[0]); el.setAttribute("y2", q[1]);
    if (opacity) el.setAttribute("stroke-opacity", opacity);
    group.appendChild(el);
  }

  var far = document.getElementById("far-grid");
  var near = document.getElementById("plane-grid");
  for (var i = -25; i <= 25; i++) {
    line(far, i / 10, -3, i / 10, 3);
    line(far, -3, i / 10, 3, i / 10);
  }
  for (var j = 1; j < 10; j++) {
    line(near, j / 10, 0, j / 10, 1, j === 5 ? 0.4 : 0.22);
    line(near, 0, j / 10, 1, j / 10, j === 5 ? 0.5 : 0.25);
  }
})();
```
